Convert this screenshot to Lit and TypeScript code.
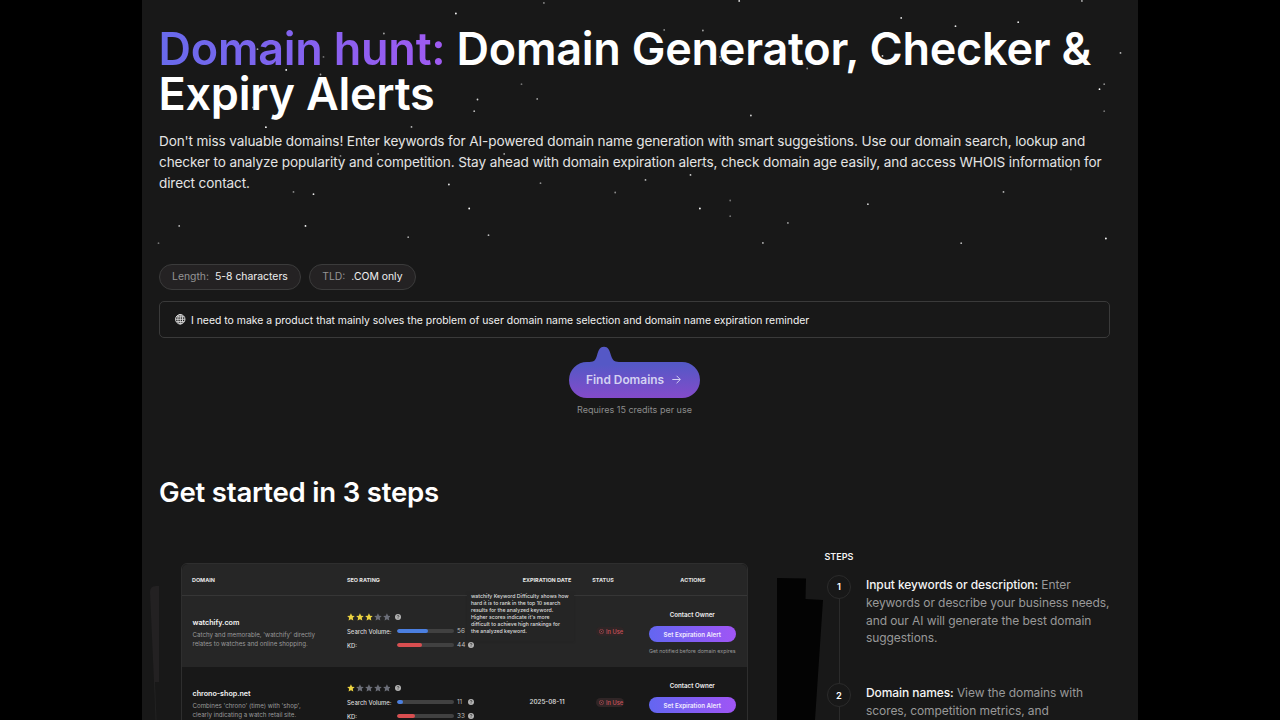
import { LitElement, html, svg, css } from "lit";
import { customElement, property } from "lit/decorators.js";

interface Domain {
  name: string;
  about: string[];
  stars: number;
  volume: number;
  kd: number;
  expires: string;
}

const DOMAINS: Domain[] = [
  {
    name: "watchify.com",
    about: ["Catchy and memorable, 'watchify' directly", "relates to watches and online shopping."],
    stars: 3, volume: 56, kd: 44, expires: "",
  },
  {
    name: "chrono-shop.net",
    about: ["Combines 'chrono' (time) with 'shop',", "clearly indicating a watch retail site."],
    stars: 1, volume: 11, kd: 33, expires: "2025-08-11",
  },
];

const TIP = [
  "watchify Keyword Difficulty shows how",
  "hard it is to rank in the top 10 search",
  "results for the analyzed keyword.",
  "Higher scores indicate it's more",
  "difficult to achieve high rankings for",
  "the analyzed keyword.",
];

// x, y, opacity of each star in the hero sky
const SKY: number[][] = [
  [401.7, 2.7, .5], [313.7, 13.3, 1], [241.7, 33.3, .6], [115.3, 49, .6], [181.3, 56.7, .4], [144, 69.7, 1],
  [178.3, 74.3, .6], [379.3, 84, .4], [395, 98.7, .6], [335.3, 99.3, .8], [332, 111, .7], [123.7, 127, 1],
  [269.3, 126.7, .7], [198.3, 155.7, .5], [236, 153.7, .6], [362, 153.7, .6], [110.7, 107.3, .6], [280.3, 145.3, .4],
  [306.7, 184.3, .9], [398.3, 183, .5], [151.3, 191.7, .5], [171.3, 194, .9], [473, 192.3, .5], [327, 208.3, 1],
  [37, 225.7, .7], [163.3, 225.7, 1], [266, 237, .6], [346.3, 235, .7], [16.3, 243, .4], [404, 165.7, .6],
  [597, .7, .9], [939.7, .7, .7], [759, 17.7, .9], [813.3, 26, .9], [876, 22, .9], [522, 29.7, .5],
  [560.7, 30.3, .6], [577.7, 56.7, .5], [578.7, 60.3, .5], [978.3, 52.7, .7], [665, 68.3, .5], [962, 84, .5],
  [957.3, 89, 1], [608.7, 115.3, .8], [962, 111, .4], [676, 134.7, .5], [740.3, 55.7, .8], [548.3, 174.7, .8],
  [503.3, 179.7, .7], [928.7, 169.3, .5], [560.3, 164.3, .5], [588, 200.3, .4], [588, 216, .4], [557.7, 208.3, 1],
  [725.7, 204, .8], [861.3, 191.7, .7], [645.7, 222.7, .6], [620.7, 242.7, .7], [819, 243, .7], [963.7, 238.3, 1],
];

@customElement("rating-stars")
class RatingStars extends LitElement {
  @property({ type: Number }) value = 0;
  static styles = css`
    :host { display: flex; align-items: center; gap: 1px; height: 8px; }
    .star { width: 7.9px; height: 7.9px; fill: #6b6e78; }
    .lit { fill: #ecd340; }
  `;
  render() {
    return [1, 2, 3, 4, 5].map(
      (n) => html`<svg class=${n <= this.value ? "star lit" : "star"} viewBox="0 0 20 20"><path d="M10 .6l2.900 6.200 6.700.8-5 4.600 1.400 6.800L10 15.600 4 19l1.400-6.800-5-4.600 6.700-.8z"/></svg>`
    );
  }
}

@customElement("help-dot")
class HelpDot extends LitElement {
  static styles = css`
    :host { display: flex; width: 6px; height: 6px; }
    svg { width: 6px; height: 6px; }
  `;
  render() {
    return html`<svg viewBox="0 0 16 16"><circle cx="8" cy="8" r="8" fill="#b4b4b4"/><path d="M5.500 6.200c.1-3.200 5-3.100 5-.1 0 1.700-2.300 1.800-2.500 3.600" fill="none" stroke="#262626" stroke-width="1.900"/><circle cx="8" cy="12.200" r="1.200" fill="#262626"/></svg>`;
  }
}

@customElement("domain-row")
class DomainRow extends LitElement {
  @property({ attribute: false }) domain!: Domain;
  @property({ attribute: false }) notice = false;
  static styles = css`
    :host { display: grid; grid-template-columns: 154.500px 170px 60px 62px 1fr; height: 71px; box-sizing: border-box; padding-left: 10.500px; align-items: center; }
    .who { margin-top: 0.500px; }
    .name { font-size: 7.150px; line-height: 13px; margin-bottom: 1px; padding-top: 0.500px; font-weight: 600; color: #f4f4f4; }
    .about { font-size: 6.150px; line-height: 9px; color: #9a9a9a; white-space: nowrap; }
    .seo { display: grid; gap: 6px; margin-top: 0; }
    .line { display: flex; align-items: center; height: 8px; font-size: 6.400px; color: #dadada; }
    .gap { margin-left: 4.500px; }
    .label { width: 49.500px; font-size: 5.950px; font-weight: 500; }
    .track { width: 57px; height: 4px; border-radius: 2px; background: #414141; overflow: hidden; }
    .fill { height: 100%; border-radius: 2px; background: #4b7fe0; }
    .red { background: #d94e50; }
    .num { width: 7.500px; margin-left: 3.500px; margin-right: 3px; color: #bdbdbd; }
    .date { font-size: 6.350px; color: #e0e0e0; text-align: center; font-weight: 500; }
    .status { display: flex; justify-content: flex-end; padding-right: 15px; }
    .badge { display: flex; align-items: center; gap: 2px; height: 9px; width: 28px; box-sizing: border-box; padding-left: 3px; border-radius: 5px; background: #302526; color: #c9525a; font-size: 5.700px; font-weight: 500; white-space: nowrap; }
    .mark { width: 5px; height: 5px; }
    .actions { height: 71px; display: flex; flex-direction: column; align-items: center; box-sizing: border-box; padding: 13.500px 1px 0 0; }
    .contact { font-size: 6.200px; line-height: 11px; font-weight: 600; color: #f0f0f0; }
    .alert { margin-top: 6px; width: 87px; height: 16px; border-radius: 8px; background: linear-gradient(90deg, #6366f1, #a055f5); color: #f1ebff; font-size: 6.200px; font-weight: 600; display: flex; align-items: center; justify-content: center; }
    .note { margin-top: 4.500px; font-size: 5.300px; line-height: 9px; color: #9a9a9a; white-space: nowrap; }
  `;
  bar(label: string, value: number, tone: string, help: boolean) {
    return html`<div class="line"><span class="label">${label}</span>
      <div class="track"><div class="fill ${tone}" style="width:${value}%"></div></div>
      <span class="num">${value}</span>${help ? html`<help-dot></help-dot>` : ""}</div>`;
  }
  render() {
    const d = this.domain;
    return html`
      <div class="who"><div class="name">${d.name}</div>${d.about.map((a) => html`<div class="about">${a}</div>`)}</div>
      <div class="seo">
        <div class="line"><rating-stars .value=${d.stars}></rating-stars><help-dot class="gap"></help-dot></div>
        ${this.bar("Search Volume:", d.volume, "", !this.notice)}
        ${this.bar("KD:", d.kd, "red", true)}
      </div>
      <div class="date">${d.expires}</div>
      <div class="status"><div class="badge"><svg class="mark" viewBox="0 0 10 10" fill="none" stroke="#c9525a"><circle cx="5" cy="5" r="4.300"/><path d="M3.500 3.500l3 3M6.500 3.500l-3 3"/></svg>In Use</div></div>
      <div class="actions"><div class="contact">Contact Owner</div><div class="alert">Set Expiration Alert</div><div class="note">${this.notice ? "Get notified before domain expires" : ""}</div></div>
    `;
  }
}

@customElement("app-root")
class AppRoot extends LitElement {
  static styles = css`
    :host { display: flex; justify-content: center; height: 720px; overflow: hidden; background: #000; font-family: Inter, sans-serif; color: #fff; }
    .page { position: relative; width: 996px; height: 720px; box-sizing: border-box; padding: 26px 28px 0 17px; background: #181818; overflow: hidden; }
    .sky, .decor { position: absolute; inset: 0; width: 996px; height: 720px; pointer-events: none; }
    h1 { margin: 0 0 0 -0.500px; font-size: 45px; line-height: 45px; font-weight: 600; letter-spacing: -0.240px; white-space: nowrap; }
    .brand { background: linear-gradient(90deg, #686aeb, #a05af2); -webkit-background-clip: text; background-clip: text; color: transparent; }
    .lead { margin: 15px 0 0; font-size: 13.600px; line-height: 20.900px; letter-spacing: -0.125px; color: #e4e4e4; white-space: nowrap; }
    .chips { display: flex; gap: 8.500px; margin-top: 70px; }
    .chip { display: flex; gap: 6px; align-items: center; height: 26px; box-sizing: border-box; padding: 0 12px; border: 1px solid #3b3b3b; border-radius: 13px; background: #242223; font-size: 10.400px; white-space: nowrap; }
    .key, .val { padding-top: 0.500px; }
    .key { color: #949494; }
    .val { color: #efefef; }
    .field { display: flex; align-items: center; gap: 5.500px; height: 37px; box-sizing: border-box; margin-top: 11px; padding: 1px 0 0 15px; border: 1px solid #3a3a3a; border-radius: 5px; font-size: 10.410px; color: #f2f2f2; }
    .globe { width: 10.500px; height: 10.500px; }
    .ask { padding-top: 1px; }
    .go { display: grid; justify-items: center; margin-top: 8px; }
    .cta { position: relative; width: 131px; height: 52px; display: flex; align-items: center; box-sizing: border-box; padding: 15px 0 0 17px; gap: 8px; font-size: 11.900px; font-weight: 600; color: #d4d2f2; }
    .blob { position: absolute; inset: 0; width: 131px; height: 52px; }
    .word, .arrow { position: relative; }
    .arrow { width: 9px; height: 9px; }
    .cost { margin-top: 5px; font-size: 9px; line-height: 13px; color: #8c8c8c; }
    h2 { margin: 59px 0 0; font-size: 27.600px; line-height: 34px; font-weight: 600; letter-spacing: -0.220px; }
    .guide { display: grid; grid-template-columns: 566.500px 1fr; margin-top: 40px; padding-left: 22px; column-gap: 77.500px; }
    .card { position: relative; height: 200px; margin-top: 14px; box-sizing: border-box; border: 1px solid #2e2e2e; border-radius: 6px 6px 0 0; background: #181818; }
    .head { display: grid; grid-template-columns: 155px 170px 60px 52px 1fr; height: 32px; box-sizing: border-box; border-bottom: 1px solid #363636; padding: 2px 0 0 10px; align-items: center; background: #262626; border-radius: 6px 6px 0 0; font-size: 5.450px; font-weight: 700; color: #e5e5e5; white-space: nowrap; }
    .mid { text-align: center; }
    .last { padding-left: 10px; }
    .on { background: #262626; }
    .tip { position: absolute; left: 285px; top: 28px; width: 107px; height: 49px; box-sizing: border-box; padding: 1px 0 0 4px; background: #252525; box-shadow: 0 1px 2px #1f1f1f33; font-size: 5.200px; line-height: 7.100px; font-weight: 500; color: #dedede; white-space: nowrap; }
    .label { font-size: 9px; line-height: 12px; font-weight: 600; color: #f2f2f2; margin-left: -0.500px; }
    .step { display: grid; grid-template-columns: 24px 1fr; column-gap: 15px; height: 108.500px; margin-left: 2px; }
    .rail { display: flex; flex-direction: column; align-items: center; }
    .dot { width: 24px; height: 24px; box-sizing: border-box; border: 1px solid #2b2b2b; border-radius: 50%; display: flex; align-items: center; justify-content: center; font-size: 9.300px; font-weight: 600; }
    .wire { width: 1px; flex: 1; background: #2b2b2b; }
    .say { font-size: 12px; line-height: 17.900px; letter-spacing: -0.080px; color: #989898; white-space: nowrap; padding-top: 1px; }
    .say b { color: #f4f4f4; font-weight: 500; }
    .steps { margin-top: 2px; }
    .list { margin-top: 12px; }
  `;
  render() {
    return html`<main class="page">
      <svg class="decor" viewBox="0 0 996 720">
        <path d="M8 592q0-6 6-6h3v96h-5z" fill="#232122"/><path d="M12.500 682l1.500 38" stroke="#222"/>
        <path d="M635 578l29 .5-.5 20.500 17.500 1-8 120h-38z" fill="#030303"/>
      </svg>
      <h1><span class="brand">Domain hunt:</span> Domain Generator, Checker &amp;<br>Expiry Alerts</h1>
      <p class="lead">Don't miss valuable domains! Enter keywords for AI-powered domain name generation with smart suggestions. Use our domain search, lookup and<br>checker to analyze popularity and competition. Stay ahead with domain expiration alerts, check domain age easily, and access WHOIS information for<br>direct contact.</p>
      <div class="chips">
        <div class="chip"><span class="key">Length:</span><span class="val">5-8 characters</span></div>
        <div class="chip"><span class="key">TLD:</span><span class="val">.COM only</span></div>
      </div>
      <div class="field">
        <svg class="globe" viewBox="0 0 20 20" fill="none" stroke="#e2e2e2" stroke-width="1.700"><circle cx="10" cy="10" r="9"/><ellipse cx="10" cy="10" rx="4.500" ry="9"/><path d="M10 1v18M1 10h18M2.500 5.500h15M2.500 14.500h15"/></svg>
        <span class="ask">I need to make a product that mainly solves the problem of user domain name selection and domain name expiration reminder</span>
      </div>
      <div class="go">
        <div class="cta">
          <svg class="blob" viewBox="0 0 131 52"><defs><linearGradient id="g" x1="0" y1="0" x2="0" y2="1"><stop offset=".35" stop-color="#5558c6"/><stop offset="1" stop-color="#844bca"/></linearGradient></defs>
          <path fill="url(#g)" d="M18 16C25 16 26 15.500 28 9.500C29.500 4 31 .7 35 .7S40.500 4 42 9.500C44 15.500 46 16 52 16H113a18 18 0 0 1 0 36H18a18 18 0 0 1 0-36z"/></svg>
          <span class="word">Find Domains</span>
          <svg class="arrow" viewBox="0 0 9 9" fill="none" stroke="#d4d2f2" stroke-width="1"><path d="M.3 4.500h7.900M4.600 .8l3.700 3.700-3.700 3.700"/></svg>
        </div>
        <div class="cost">Requires 15 credits per use</div>
      </div>
      <h2>Get started in 3 steps</h2>
      <section class="guide">
        <div class="card">
          <div class="head"><span>DOMAIN</span><span>SEO RATING</span><span class="mid">EXPIRATION DATE</span><span class="mid">STATUS</span><span class="mid last">ACTIONS</span></div>
          ${DOMAINS.map((d, i) => html`<domain-row class=${i ? "" : "on"} .domain=${d} .notice=${i === 0}></domain-row>`)}
          <div class="tip">${TIP.map((t) => html`<div>${t}</div>`)}</div>
        </div>
        <div class="steps">
          <div class="label">STEPS</div>
          <div class="list">
            <div class="step"><div class="rail"><div class="dot">1</div><div class="wire"></div></div>
              <div class="say"><b>Input keywords or description:</b> Enter<br>keywords or describe your business needs,<br>and our AI will generate the best domain<br>suggestions.</div></div>
            <div class="step"><div class="rail"><div class="dot">2</div><div class="wire"></div></div>
              <div class="say"><b>Domain names:</b> View the domains with<br>scores, competition metrics, and</div></div>
          </div>
        </div>
      </section>
      <svg class="sky" viewBox="0 0 996 720">${SKY.map(([x, y, o]) => svg`<circle cx=${x + 0.2} cy=${y + 0.2} r="0.9" fill="#fff" opacity=${o}/>`)}</svg>
    </main>`;
  }
}
